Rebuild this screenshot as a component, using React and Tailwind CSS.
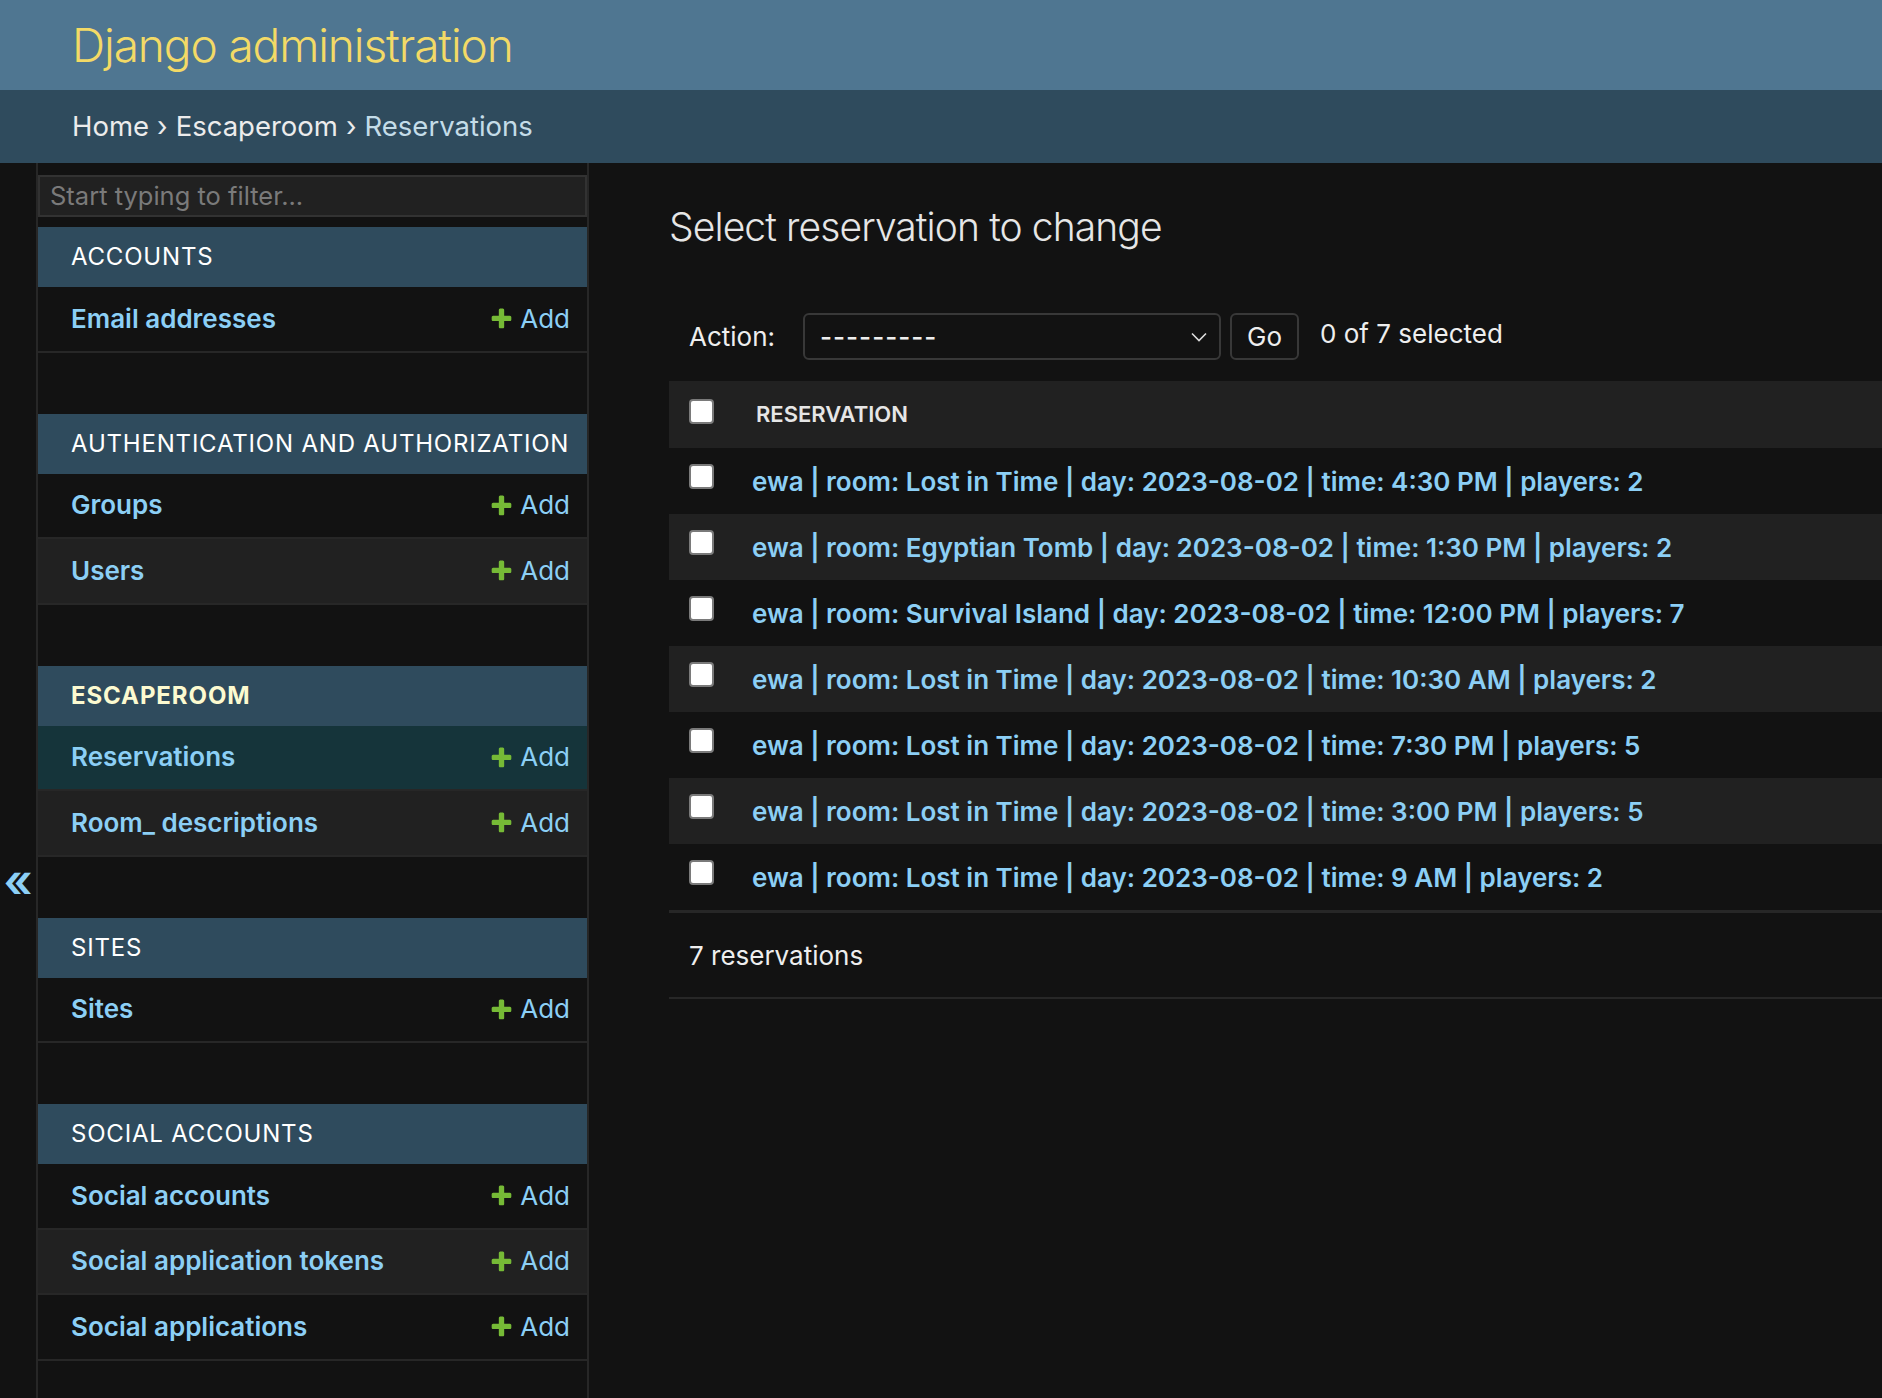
import React from "react";

const PlusIcon = () => (
  <svg width="25" height="25" viewBox="0 0 1792 1792" className="shrink-0">
    <path
      fill="#76ba36"
      d="M1600 796v192q0 40-28 68t-68 28h-416v416q0 40-28 68t-68 28h-192q-40 0-68-28t-28-68v-416h-416q-40 0-68-28t-28-68v-192q0-40 28-68t68-28h416v-416q0-40 28-68t68-28h192q40 0 68 28t28 68v416h416q40 0 68 28t28 68z"
    />
  </svg>
);

const SideRow = ({ label, alt, selected }) => {
  const bg = selected ? "bg-[#15343a]" : alt ? "bg-[#212121]" : "bg-[#121212]";
  return (
    <div className={`flex items-center justify-between h-[65.5px] border-b-2 border-[#272727] pl-[33px] pr-[17px] ${bg}`}>
      <span className="text-[26px] font-semibold text-[#8ccff5] leading-none whitespace-nowrap">{label}</span>
      <span className="flex items-center gap-[6px] text-[26px] text-[#8ccff5] leading-none">
        <PlusIcon />
        Add
      </span>
    </div>
  );
};

const Module = ({ title, rows, current, selectedIndex }) => (
  <div className="mb-[61px]">
    <div
      className={
        current
          ? "h-[60px] flex items-center pl-[33px] bg-[#2f4b5d] text-[24px] tracking-[0.9px] font-bold text-[#fcfad0] whitespace-nowrap"
          : "h-[60px] flex items-center pl-[33px] bg-[#2f4b5d] text-[24px] tracking-[0.8px] text-white whitespace-nowrap"
      }
    >
      {title}
    </div>
    {rows.map((r, i) => (
      <SideRow key={r} label={r} alt={i % 2 === 1} selected={selectedIndex === i} />
    ))}
  </div>
);

const Checkbox = () => (
  <div className="w-[25px] h-[25px] bg-white border-2 border-[#7a7a7a] rounded-[4px]" />
);

const reservations = [
  "ewa | room: Lost in Time | day: 2023-08-02 | time: 4:30 PM | players: 2",
  "ewa | room: Egyptian Tomb | day: 2023-08-02 | time: 1:30 PM | players: 2",
  "ewa | room: Survival Island | day: 2023-08-02 | time: 12:00 PM | players: 7",
  "ewa | room: Lost in Time | day: 2023-08-02 | time: 10:30 AM | players: 2",
  "ewa | room: Lost in Time | day: 2023-08-02 | time: 7:30 PM | players: 5",
  "ewa | room: Lost in Time | day: 2023-08-02 | time: 3:00 PM | players: 5",
  "ewa | room: Lost in Time | day: 2023-08-02 | time: 9 AM | players: 2",
];

export default function App() {
  return (
    <div className="h-[1398px] w-full overflow-hidden bg-[#121212] text-[#eeeeee] flex flex-col font-['Inter','Noto_Sans',sans-serif]">
      {/* Header */}
      <header className="h-[90px] shrink-0 bg-[#4f7691] flex items-center px-[72px]">
        <h1 className="text-[46px] tracking-[-1.1px] font-light text-[#f3da66] leading-none">Django administration</h1>
      </header>

      {/* Breadcrumbs */}
      <nav className="h-[73px] shrink-0 bg-[#2f4b5d] flex items-center px-[72px] text-[27.5px] leading-none">
        <span className="text-[#ececec]">Home</span>
        <span className="text-[#ececec] mx-[8px]">›</span>
        <span className="text-[#ececec]">Escaperoom</span>
        <span className="text-[#ececec] mx-[8px]">›</span>
        <span className="text-[#c4dce8]">Reservations</span>
      </nav>

      <div className="flex flex-1 min-h-0">
        {/* Toggle */}
        <div className="w-[38px] shrink-0 border-r-2 border-[#272727] flex justify-center pt-[694px]">
          <span className="text-[46px] leading-[46px] h-[46px] font-semibold text-[#8ccff5]">«</span>
        </div>

        {/* Sidebar */}
        <aside className="w-[551px] shrink-0 border-r-2 border-[#272727] pt-[12px]">
          <div className="h-[42px] border-2 border-[#323232] bg-[#212121] flex items-center pl-[10px] text-[25.5px] text-[#7a7a7a]">
            Start typing to filter...
          </div>
          <div className="h-[10px]" />
          <Module title="ACCOUNTS" rows={["Email addresses"]} />
          <Module title="AUTHENTICATION AND AUTHORIZATION" rows={["Groups", "Users"]} />
          <Module title="ESCAPEROOM" rows={["Reservations", "Room_ descriptions"]} current selectedIndex={0} />
          <Module title="SITES" rows={["Sites"]} />
          <Module title="SOCIAL ACCOUNTS" rows={["Social accounts", "Social application tokens", "Social applications"]} />
        </aside>

        {/* Main */}
        <main className="flex-1 min-w-0 pl-[80px] pt-[40px]">
          <h1 className="text-[39px] tracking-[-0.9px] leading-[48px] font-light text-[#e6e6e6]">Select reservation to change</h1>

          <div className="mt-[62px] h-[47px] flex items-center pl-[20px]">
            <span className="text-[26px] text-[#eeeeee]">Action:</span>
            <div className="ml-[28px] w-[418px] h-[47px] border-2 border-[#383838] rounded-[6px] flex items-center justify-between pl-[15px] pr-[12px]">
              <span className="text-[26px] tracking-[1px] text-[#eeeeee] font-medium">---------</span>
              <svg width="16" height="10" viewBox="0 0 16 10">
                <path d="M1 1.5 L8 8.5 L15 1.5" fill="none" stroke="#dddddd" strokeWidth="1.6" />
              </svg>
            </div>
            <div className="ml-[9px] w-[69px] h-[47px] border-2 border-[#383838] rounded-[6px] flex items-center justify-center text-[26px] text-[#eeeeee]">
              Go
            </div>
            <span className="ml-[21px] mb-[6px] text-[26px] text-[#eeeeee]">0 of 7 selected</span>
          </div>

          <div className="mt-[21px]">
            <div className="h-[67px] bg-[#212121] flex">
              <div className="w-[87px] shrink-0 pl-[20px] pt-[18px]">
                <Checkbox />
              </div>
              <div className="flex items-center text-[22px] font-semibold text-[#e6e6e6]">RESERVATION</div>
            </div>
            {reservations.map((r, i) => (
              <div key={i} className={i % 2 === 1 ? "h-[66px] flex bg-[#212121]" : "h-[66px] flex bg-[#121212]"}>
                <div className="w-[83px] shrink-0 pl-[20px] pt-[16px]">
                  <Checkbox />
                </div>
                <div className="flex items-center text-[26px] font-semibold text-[#8ccff5] whitespace-nowrap">{r}</div>
              </div>
            ))}
            <div className="h-[3px] bg-[#272727]" />
            <div className="h-[86px] flex items-center pl-[20px] border-b-2 border-[#272727] text-[26px] text-[#eeeeee]">
              7 reservations
            </div>
          </div>
        </main>
      </div>
    </div>
  );
}
